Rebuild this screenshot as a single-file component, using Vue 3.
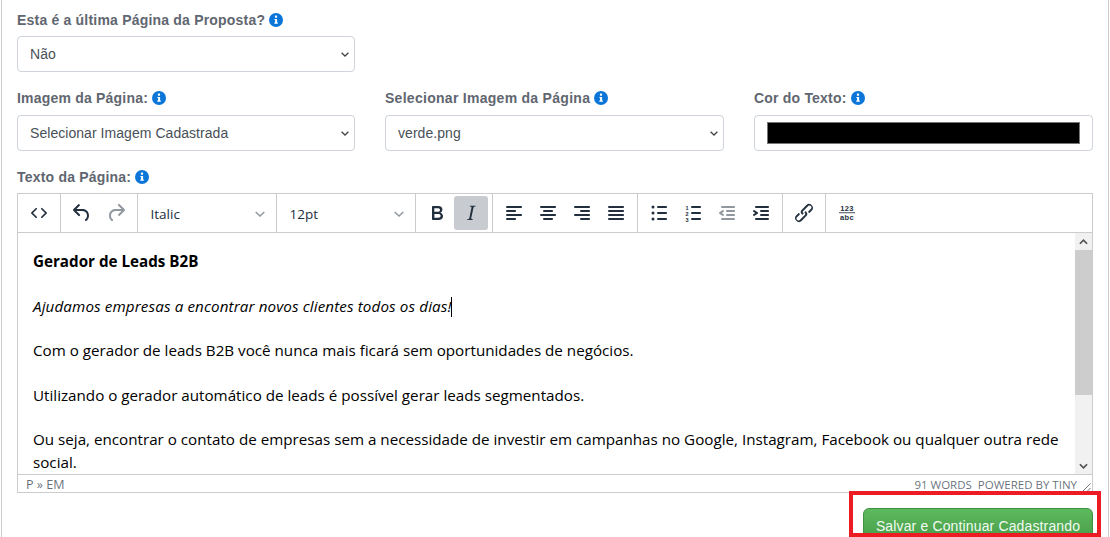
<script setup>
const P = {
  code: 'M9.8 15.7c.3.3.3.8 0 1-.3.4-.9.4-1.2 0l-4.4-4.1a.8.8 0 010-1.2l4.4-4.2c.3-.3.9-.3 1.2 0 .3.3.3.8 0 1.1L6 12l3.8 3.7zm4.4 0c-.3.3-.3.8 0 1 .3.4.9.4 1.2 0l4.4-4.1c.3-.3.3-.9 0-1.2l-4.4-4.2a.8.8 0 00-1.2 0c-.3.3-.3.8 0 1.1L18 12l-3.8 3.7z',
  undo: 'M6.4 8H12c3.7 0 6.2 2 6.8 5.1.6 2.7-.4 5.6-2.3 6.8a1 1 0 01-1-1.8c1.1-.6 1.8-2.7 1.4-4.6-.5-2.1-2.1-3.5-4.9-3.5H6.4l3.3 3.3a1 1 0 11-1.4 1.4l-5-5a1 1 0 010-1.4l5-5a1 1 0 011.4 1.4L6.4 8z',
  redo: 'M17.6 10H12c-2.8 0-4.4 1.4-4.9 3.5-.4 2 .3 4 1.4 4.6a1 1 0 11-1 1.8c-2-1.2-2.9-4.1-2.3-6.8.6-3 3-5.1 6.8-5.1h5.6l-3.3-3.3a1 1 0 111.4-1.4l5 5a1 1 0 010 1.4l-5 5a1 1 0 01-1.4-1.4l3.3-3.3z',
  bold: 'M7.8 19c-.3 0-.5 0-.6-.2l-.2-.5V5.7c0-.2 0-.4.2-.5l.6-.2h5c1.5 0 2.7.3 3.5 1 .7.6 1.1 1.4 1.1 2.5a3 3 0 01-.6 1.9c-.4.6-1 1-1.6 1.2.4.1.9.3 1.3.6s.8.7 1 1.2c.4.4.5 1 .5 1.6 0 1.3-.4 2.3-1.3 3-.8.7-2.1 1-3.8 1H7.8zm5-8.3c.6 0 1.2-.1 1.6-.5.4-.3.6-.7.6-1.3 0-1.1-.8-1.7-2.3-1.7H9.3v3.5h3.4zm.5 6c.7 0 1.3-.1 1.7-.4.4-.4.6-.9.6-1.5s-.2-1-.7-1.4c-.4-.3-1-.4-2-.4H9.4v3.8h4z',
  italic: 'M16.7 4.7l-.1.9h-.3c-.6 0-1 0-1.4.3-.3.3-.4.6-.5 1.1l-2.1 9.8v.6c0 .5.4.8 1.4.8h.2l-.2.8H8l.2-.8h.2c1.1 0 1.8-.5 2-1.5l2-9.8.1-.5c0-.6-.4-.8-1.4-.8h-.3l.2-.9h5.8z',
  left: 'M5 5h14c.6 0 1 .4 1 1s-.4 1-1 1H5a1 1 0 110-2zm0 4h8c.6 0 1 .4 1 1s-.4 1-1 1H5a1 1 0 110-2zm0 8h8c.6 0 1 .4 1 1s-.4 1-1 1H5a1 1 0 010-2zm0-4h14c.6 0 1 .4 1 1s-.4 1-1 1H5a1 1 0 010-2z',
  center: 'M5 5h14c.6 0 1 .4 1 1s-.4 1-1 1H5a1 1 0 110-2zm3 4h8c.6 0 1 .4 1 1s-.4 1-1 1H8a1 1 0 110-2zm0 8h8c.6 0 1 .4 1 1s-.4 1-1 1H8a1 1 0 010-2zm-3-4h14c.6 0 1 .4 1 1s-.4 1-1 1H5a1 1 0 010-2z',
  right: 'M5 5h14c.6 0 1 .4 1 1s-.4 1-1 1H5a1 1 0 110-2zm6 4h8c.6 0 1 .4 1 1s-.4 1-1 1h-8a1 1 0 010-2zm0 8h8c.6 0 1 .4 1 1s-.4 1-1 1h-8a1 1 0 010-2zm-6-4h14c.6 0 1 .4 1 1s-.4 1-1 1H5a1 1 0 010-2z',
  justify: 'M5 5h14c.6 0 1 .4 1 1s-.4 1-1 1H5a1 1 0 110-2zm0 4h14c.6 0 1 .4 1 1s-.4 1-1 1H5a1 1 0 110-2zm0 4h14c.6 0 1 .4 1 1s-.4 1-1 1H5a1 1 0 010-2zm0 4h14c.6 0 1 .4 1 1s-.4 1-1 1H5a1 1 0 010-2z',
  bull: 'M11 5h8c.6 0 1 .4 1 1s-.4 1-1 1h-8a1 1 0 010-2zm0 6h8c.6 0 1 .4 1 1s-.4 1-1 1h-8a1 1 0 010-2zm0 6h8c.6 0 1 .4 1 1s-.4 1-1 1h-8a1 1 0 010-2zM6 4.5a1.5 1.5 0 110 3 1.5 1.5 0 010-3zm0 6a1.5 1.5 0 110 3 1.5 1.5 0 010-3zm0 6a1.5 1.5 0 110 3 1.5 1.5 0 010-3z',
  num: 'M11 5h8c.6 0 1 .4 1 1s-.4 1-1 1h-8a1 1 0 010-2zm0 6h8c.6 0 1 .4 1 1s-.4 1-1 1h-8a1 1 0 010-2zm0 6h8c.6 0 1 .4 1 1s-.4 1-1 1h-8a1 1 0 010-2z',
  outdent: 'M7 5h12c.6 0 1 .4 1 1s-.4 1-1 1H7a1 1 0 110-2zm5 4h7c.6 0 1 .4 1 1s-.4 1-1 1h-7a1 1 0 010-2zm0 4h7c.6 0 1 .4 1 1s-.4 1-1 1h-7a1 1 0 010-2zm-5 4h12a1 1 0 010 2H7a1 1 0 010-2zm1.6-3.8a1 1 0 01-1.2 1.6l-3-2a1 1 0 010-1.6l3-2a1 1 0 011.2 1.6L6.8 12l1.8 1.2z',
  indent: 'M7 5h12c.6 0 1 .4 1 1s-.4 1-1 1H7a1 1 0 110-2zm5 4h7c.6 0 1 .4 1 1s-.4 1-1 1h-7a1 1 0 010-2zm0 4h7c.6 0 1 .4 1 1s-.4 1-1 1h-7a1 1 0 010-2zm-5 4h12a1 1 0 010 2H7a1 1 0 010-2zm-2.6-3.8L6.2 12l-1.8-1.2a1 1 0 011.2-1.6l3 2a1 1 0 010 1.6l-3 2a1 1 0 11-1.2-1.6z',
  link: 'M6.2 12.3a1 1 0 011.4 1.4l-2 2a2 2 0 102.6 2.8l4.8-4.8a1 1 0 000-1.4 1 1 0 111.4-1.3 2.9 2.9 0 010 4L9.6 20a3.9 3.9 0 01-5.5-5.5l2-2zm11.6-.6a1 1 0 01-1.4-1.4l2-2a2 2 0 10-2.6-2.8L11 10.3a1 1 0 000 1.4A1 1 0 119.6 13a2.9 2.9 0 010-4L14.4 4a3.9 3.9 0 015.5 5.5l-2 2z'
}
const paragraphs = [
  'Com o gerador de leads B2B você nunca mais ficará sem oportunidades de negócios.',
  'Utilizando o gerador automático de leads é possível gerar leads segmentados.',
  'Ou seja, encontrar o contato de empresas sem a necessidade de investir em campanhas no Google, Instagram, Facebook ou qualquer outra rede social.'
]
</script>

<template>
  <div class="page">
    <div class="field first">
      <label class="lbl">Esta é a última Página da Proposta?
        <svg class="info" viewBox="0 0 14 14"><circle cx="7" cy="7" r="7" fill="#0b76d8"/><rect x="5.9" y="2.6" width="2.2" height="2.1" rx=".4" fill="#fff"/><path d="M5.4 5.9h2.7v3.6h.7v1.2H5.3V9.5h.8V7.1h-.7z" fill="#fff"/></svg>
      </label>
      <select class="ctl half"><option>Não</option></select>
    </div>

    <div class="row">
      <div class="field">
        <label class="lbl">Imagem da Página:
          <svg class="info" viewBox="0 0 14 14"><circle cx="7" cy="7" r="7" fill="#0b76d8"/><rect x="5.9" y="2.6" width="2.2" height="2.1" rx=".4" fill="#fff"/><path d="M5.4 5.9h2.7v3.6h.7v1.2H5.3V9.5h.8V7.1h-.7z" fill="#fff"/></svg>
        </label>
        <select class="ctl"><option>Selecionar Imagem Cadastrada</option></select>
      </div>
      <div class="field">
        <label class="lbl wide">Selecionar Imagem da Página
          <svg class="info" viewBox="0 0 14 14"><circle cx="7" cy="7" r="7" fill="#0b76d8"/><rect x="5.9" y="2.6" width="2.2" height="2.1" rx=".4" fill="#fff"/><path d="M5.4 5.9h2.7v3.6h.7v1.2H5.3V9.5h.8V7.1h-.7z" fill="#fff"/></svg>
        </label>
        <select class="ctl"><option>verde.png</option></select>
      </div>
      <div class="field">
        <label class="lbl">Cor do Texto:
          <svg class="info" viewBox="0 0 14 14"><circle cx="7" cy="7" r="7" fill="#0b76d8"/><rect x="5.9" y="2.6" width="2.2" height="2.1" rx=".4" fill="#fff"/><path d="M5.4 5.9h2.7v3.6h.7v1.2H5.3V9.5h.8V7.1h-.7z" fill="#fff"/></svg>
        </label>
        <div class="ctl colorbox"><div class="swatch"></div></div>
      </div>
    </div>

    <div class="field text">
      <label class="lbl">Texto da Página:
        <svg class="info" viewBox="0 0 14 14"><circle cx="7" cy="7" r="7" fill="#0b76d8"/><rect x="5.9" y="2.6" width="2.2" height="2.1" rx=".4" fill="#fff"/><path d="M5.4 5.9h2.7v3.6h.7v1.2H5.3V9.5h.8V7.1h-.7z" fill="#fff"/></svg>
      </label>

      <div class="editor">
        <div class="toolbar">
          <div class="group">
            <button class="tb"><svg viewBox="0 0 24 24"><path :d="P.code"/></svg></button>
          </div>
          <div class="group">
            <button class="tb"><svg viewBox="0 0 24 24"><path :d="P.undo"/></svg></button>
            <button class="tb off"><svg viewBox="0 0 24 24"><path :d="P.redo"/></svg></button>
          </div>
          <div class="group pick">
            <span>Italic</span>
            <svg class="chev" viewBox="0 0 10 6"><path d="M.7.9L5 5l4.3-4.1" fill="none" stroke-width="1.4"/></svg>
          </div>
          <div class="group pick">
            <span>12pt</span>
            <svg class="chev" viewBox="0 0 10 6"><path d="M.7.9L5 5l4.3-4.1" fill="none" stroke-width="1.4"/></svg>
          </div>
          <div class="group">
            <button class="tb"><svg viewBox="0 0 24 24"><path :d="P.bold"/></svg></button>
            <button class="tb on"><svg viewBox="0 0 24 24"><path :d="P.italic"/></svg></button>
          </div>
          <div class="group">
            <button class="tb"><svg viewBox="0 0 24 24"><path :d="P.left"/></svg></button>
            <button class="tb"><svg viewBox="0 0 24 24"><path :d="P.center"/></svg></button>
            <button class="tb"><svg viewBox="0 0 24 24"><path :d="P.right"/></svg></button>
            <button class="tb"><svg viewBox="0 0 24 24"><path :d="P.justify"/></svg></button>
          </div>
          <div class="group">
            <button class="tb"><svg viewBox="0 0 24 24"><path :d="P.bull"/></svg></button>
            <button class="tb"><svg viewBox="0 0 24 24">
              <path :d="P.num"/>
              <text x="6" y="8.500" class="mini">1</text>
              <text x="6" y="14.500" class="mini">2</text>
              <text x="6" y="20.500" class="mini">3</text>
            </svg></button>
            <button class="tb off"><svg viewBox="0 0 24 24"><path :d="P.outdent"/></svg></button>
            <button class="tb"><svg viewBox="0 0 24 24"><path :d="P.indent"/></svg></button>
          </div>
          <div class="group">
            <button class="tb"><svg viewBox="0 0 24 24"><path :d="P.link"/></svg></button>
          </div>
          <div class="group last">
            <button class="tb"><svg viewBox="0 0 24 24">
              <text x="12" y="9.500" class="count">123</text>
              <rect x="4" y="11" width="16" height="1.3" opacity=".65"/>
              <text x="12" y="18.500" class="count">abc</text>
            </svg></button>
          </div>
        </div>

        <div class="body">
          <div class="content">
            <p><strong>Gerador de Leads B2B</strong></p>
            <p><em>Ajudamos empresas a encontrar novos clientes todos os dias!</em><i class="caret"></i></p>
            <p v-for="t in paragraphs" :key="t">{{ t }}</p>
          </div>
          <div class="scroll">
            <div class="arrow">
              <svg viewBox="0 0 10 6"><path d="M1 5l4-4 4 4" fill="none" stroke-width="1.8"/></svg>
            </div>
            <div class="track"><div class="thumb"></div></div>
            <div class="arrow">
              <svg viewBox="0 0 10 6"><path d="M1 1l4 4 4-4" fill="none" stroke-width="1.8"/></svg>
            </div>
          </div>
        </div>

        <div class="status">
          <span class="status-l">P » EM</span>
          <span class="status-r">91 WORDS&nbsp;&nbsp;POWERED BY TINY</span>
          <svg class="grip" viewBox="0 0 10 10"><path d="M9.5 1.5l-8 8M9.5 6l-3.500 3.500" fill="none" stroke="#6f7780" stroke-width="1"/></svg>
        </div>
      </div>
    </div>

    <div class="actions">
      <button class="save">Salvar e Continuar Cadastrando</button>
    </div>

    <div class="highlight"></div>
  </div>
</template>

<style>
html, body { margin: 0; overflow: hidden; background: #fff; }
</style>

<style scoped>
.page {
  position: relative;
  box-sizing: border-box;
  width: 1108px;
  height: 537px;
  margin-left: 1px;
  padding: 9px 13px 0 15px;
  border-left: 1px solid #ccc;
  border-right: 1px solid #ccc;
  overflow: hidden;
  font-family: "Liberation Sans", Arial, sans-serif;
  font-size: 14px;
  color: #495057;
}
.lbl {
  display: flex;
  align-items: center;
  gap: 4px;
  height: 21px;
  margin-bottom: 6px;
  font-weight: 700;
  font-size: 14px;
  letter-spacing: 0.2px;
  color: #5f6670;
}
.lbl.wide { letter-spacing: 0.28px; }
.row .lbl { margin-bottom: 7px; }
.info { width: 14px; height: 14px; flex: none; }
.first { margin-bottom: 15px; }
.row {
  display: grid;
  grid-template-columns: 338px 339px 339px;
  column-gap: 30px;
  margin-bottom: 15px;
}
.ctl {
  display: block;
  box-sizing: border-box;
  width: 100%;
  height: 36px;
  padding: 0 12px;
  border: 1px solid #ced4da;
  border-radius: 4px;
  background: #fff;
  font-family: "Liberation Sans", Arial, sans-serif;
  font-size: 14px;
  letter-spacing: 0.05px;
  color: #495057;
}
select.ctl {
  appearance: none;
  background: #fff url("data:image/svg+xml,%3Csvg xmlns='http://www.w3.org/2000/svg' width='8' height='5' viewBox='0 0 8 5'%3E%3Cpath d='M.6.7L4 4l3.400-3.300' fill='none' stroke='%23444' stroke-width='1.3'/%3E%3C/svg%3E") no-repeat right 5px center;
}
.half { width: 338px; }
.colorbox { padding: 6px 12px; }
.swatch {
  box-sizing: border-box;
  height: 22px;
  background: #000;
  border: 1px solid #767676;
}
.editor {
  box-sizing: border-box;
  width: 1076px;
  height: 300px;
  display: flex;
  flex-direction: column;
  border: 1px solid #ccc;
}
.toolbar {
  display: flex;
  flex: none;
  height: 39px;
  box-sizing: border-box;
  border-bottom: 1px solid #ccc;
}
.group {
  display: flex;
  align-items: flex-start;
  padding: 2px 4px 0;
  border-right: 1px solid #ccc;
}
.group.last { border-right: 0; }
.tb {
  width: 34px;
  height: 34px;
  padding: 0;
  border: 0;
  border-radius: 3px;
  background: transparent;
  display: flex;
  align-items: center;
  justify-content: center;
}
.tb svg { width: 24px; height: 24px; fill: #222f3e; }
.tb.off svg { fill: rgba(34, 47, 62, 0.5); }
.tb.on { background: #c8cbcf; }
.mini {
  font: 700 5.500px "Liberation Sans", sans-serif;
  text-anchor: middle;
}
.count {
  font: 700 7.500px "Liberation Sans", sans-serif;
  text-anchor: middle;
  letter-spacing: 0.3px;
}
.pick {
  box-sizing: border-box;
  width: 139px;
  padding: 1px 11px 0 12.500px;
  align-items: center;
  justify-content: space-between;
  font-family: "Open Sans", sans-serif;
  font-size: 13.500px;
  color: #222f3e;
}
.chev { width: 10px; height: 6px; stroke: rgba(34, 47, 62, 0.5); }
.body {
  flex: 1;
  min-height: 0;
  display: flex;
}
.content {
  flex: 1;
  min-width: 0;
  padding: 17px 15px 0 15px;
  overflow: hidden;
  font-family: "Open Sans", sans-serif;
  font-size: 15.200px;
  line-height: 22.300px;
  color: #000;
}
.content p { margin: 0 0 22.300px; }
.content em { letter-spacing: 0.12px; }
.caret {
  display: inline-block;
  width: 1px;
  height: 20px;
  background: #000;
  vertical-align: -5px;
}
.scroll {
  flex: none;
  width: 17px;
  display: flex;
  flex-direction: column;
  background: #f1f1f1;
}
.arrow {
  flex: none;
  height: 17px;
  display: flex;
  align-items: center;
  justify-content: center;
}
.arrow svg { width: 9px; height: 6px; stroke: #505050; }
.track { flex: 1; }
.thumb { height: 145px; background: #cdcdcd; }
.status {
  flex: none;
  position: relative;
  box-sizing: border-box;
  height: 18px;
  padding: 1px 15px 0 8px;
  display: flex;
  align-items: center;
  justify-content: space-between;
  border-top: 1px solid #ccc;
  font-family: "Open Sans", sans-serif;
  font-size: 11.500px;
  color: rgba(34, 47, 62, 0.7);
}
.status-l { font-size: 12.500px; }
.grip { position: absolute; right: 1px; bottom: 0; width: 10px; height: 10px; }
.actions {
  width: 1076px;
  display: flex;
  justify-content: flex-end;
  margin-top: 15px;
}
.save {
  box-sizing: border-box;
  width: 230px;
  height: 36px;
  padding: 0;
  border: 1px solid #3f9142;
  border-radius: 6px;
  background: linear-gradient(#5dba5e, #469a47);
  color: #f2fbf2;
  font-family: "Liberation Sans", Arial, sans-serif;
  font-size: 14px;
  letter-spacing: 0.14px;
}
.highlight {
  position: absolute;
  left: 847px;
  top: 491px;
  box-sizing: border-box;
  width: 252px;
  height: 46px;
  border: 4px solid #ed1c24;
}
</style>
